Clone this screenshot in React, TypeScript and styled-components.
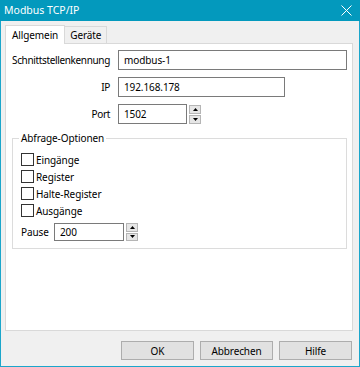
import React from 'react';
import styled, { createGlobalStyle } from 'styled-components';

const Global = createGlobalStyle`
  html, body { margin: 0; padding: 0; background: #ffffff; }
  body { font-family: "Noto Sans", "Open Sans", sans-serif; font-size: 10px; color: #000; }
  * { box-sizing: border-box; }
`;

const Window = styled.div`
  width: 360px;
  height: 367px;
  display: flex;
  flex-direction: column;
  background: #f0f0f0;
  border: 1px solid #1ba6cb;
  border-top: none;
`;

const TitleBar = styled.div`
  height: 21px;
  margin: 0 -1px;
  background: #0399bd;
  color: #fff;
  display: flex;
  align-items: center;
  justify-content: space-between;
  padding: 0 8px 1px 4px;
  font-size: 10.5px;
`;

const Body = styled.div`
  flex: 1;
  display: flex;
  flex-direction: column;
  padding: 4px 6px 6px 4px;
`;

const TabStrip = styled.div`
  display: flex;
  align-items: flex-end;
  height: 18px;
  position: relative;
  z-index: 1;
`;

const Tab = styled.div<{ $active?: boolean }>`
  height: ${(p) => (p.$active ? '19px' : '17px')};
  margin-bottom: ${(p) => (p.$active ? '-1px' : '0')};
  padding: 0 ${(p) => (p.$active ? '6px' : '5px')};
  display: flex;
  align-items: center;
  background: ${(p) => (p.$active ? '#ffffff' : '#f0f0f0')};
  border: 1px solid #d9d9d9;
  border-bottom: none;
  border-left: ${(p) => (p.$active ? '1px solid #d9d9d9' : 'none')};
  letter-spacing: -0.1px;
`;

const Panel = styled.div`
  flex: 1;
  background: #fff;
  border: 1px solid #d9d9d9;
  padding: 6px 5px 0 6px;
  display: flex;
  flex-direction: column;
`;

const FormGrid = styled.div`
  display: grid;
  grid-template-columns: 98px 1fr;
  column-gap: 8px;
  row-gap: 7px;
  align-items: center;
`;

const Label = styled.label`
  justify-self: end;
  letter-spacing: -0.35px;
  white-space: nowrap;
`;

const Input = styled.input<{ $w?: number; $h?: number }>`
  width: ${(p) => (p.$w ? `${p.$w}px` : '100%')};
  height: ${(p) => p.$h ?? 20}px;
  border: 1px solid #7a7a7a;
  padding: 0 5px;
  font-family: inherit;
  font-size: 10px;
  letter-spacing: -0.1px;
  color: #000;
  background: #fff;
  outline: none;
`;

const SpinRow = styled.div`
  display: flex;
  align-items: center;
  gap: 2px;
`;

const Spinner = styled.div<{ $h: number }>`
  width: 12px;
  height: ${(p) => p.$h}px;
  display: flex;
  flex-direction: column;
  gap: 1px;
`;

const SpinButton = styled.div`
  flex: 1;
  background: #e6e6e6;
  border: 1px solid #b5b5b5;
  display: flex;
  align-items: center;
  justify-content: center;
`;

const Group = styled.fieldset`
  margin: 6px 0 0 0;
  border: 1px solid #dcdcdc;
  padding: 5px 8px 7px 8px;
  display: flex;
  flex-direction: column;
`;

const Legend = styled.legend`
  padding: 0 2px;
  margin-left: -2px;
  line-height: 16px;
  letter-spacing: -0.1px;
`;

const CheckRow = styled.label`
  height: 17px;
  display: flex;
  align-items: center;
  gap: 2px;
  letter-spacing: -0.1px;
`;

const Box = styled.span`
  width: 13px;
  height: 13px;
  border: 1px solid #333;
  background: #fff;
`;

const PauseRow = styled.div`
  display: flex;
  align-items: center;
  margin-top: 4px;
`;

const PauseLabel = styled.span`
  width: 33px;
  letter-spacing: -0.1px;
`;

const ButtonRow = styled.div`
  display: flex;
  justify-content: flex-end;
  gap: 6px;
  margin-top: 10px;
  padding-right: 1px;
`;

const Button = styled.button`
  width: 73px;
  height: 19px;
  background: #e1e1e1;
  border: 1px solid #adadad;
  font-family: inherit;
  font-size: 10px;
  letter-spacing: -0.1px;
  color: #000;
  padding: 0;
`;

const Up = () => (
  <svg width="5" height="3" viewBox="0 0 5 3"><path d="M0 3 L2.5 0 L5 3 Z" fill="#000" /></svg>
);
const Down = () => (
  <svg width="5" height="3" viewBox="0 0 5 3"><path d="M0 0 L2.5 3 L5 0 Z" fill="#000" /></svg>
);

const Spin = ({ h }: { h: number }) => (
  <Spinner $h={h}>
    <SpinButton><Up /></SpinButton>
    <SpinButton><Down /></SpinButton>
  </Spinner>
);

export default function App() {
  return (
    <>
      <Global />
      <Window>
        <TitleBar>
          <span>Modbus TCP/IP</span>
          <svg width="11" height="11" viewBox="0 0 11 11">
            <path d="M0.5 0.5 L10.5 10.5 M10.5 0.5 L0.5 10.5" stroke="#fff" strokeWidth="1" />
          </svg>
        </TitleBar>
        <Body>
          <TabStrip>
            <Tab $active>Allgemein</Tab>
            <Tab>Geräte</Tab>
          </TabStrip>
          <Panel>
            <FormGrid>
              <Label>Schnittstellenkennung</Label>
              <Input defaultValue="modbus-1" />
              <Label>IP</Label>
              <Input $w={167} defaultValue="192.168.178" />
              <Label>Port</Label>
              <SpinRow>
                <Input $w={69} defaultValue="1502" />
                <Spin h={19} />
              </SpinRow>
            </FormGrid>
            <Group>
              <Legend>Abfrage-Optionen</Legend>
              <CheckRow><Box />Eingänge</CheckRow>
              <CheckRow><Box />Register</CheckRow>
              <CheckRow><Box />Halte-Register</CheckRow>
              <CheckRow><Box />Ausgänge</CheckRow>
              <PauseRow>
                <PauseLabel>Pause</PauseLabel>
                <SpinRow>
                  <Input $w={70} $h={18} defaultValue="200" />
                  <Spin h={18} />
                </SpinRow>
              </PauseRow>
            </Group>
          </Panel>
          <ButtonRow>
            <Button>OK</Button>
            <Button>Abbrechen</Button>
            <Button>Hilfe</Button>
          </ButtonRow>
        </Body>
      </Window>
    </>
  );
}
